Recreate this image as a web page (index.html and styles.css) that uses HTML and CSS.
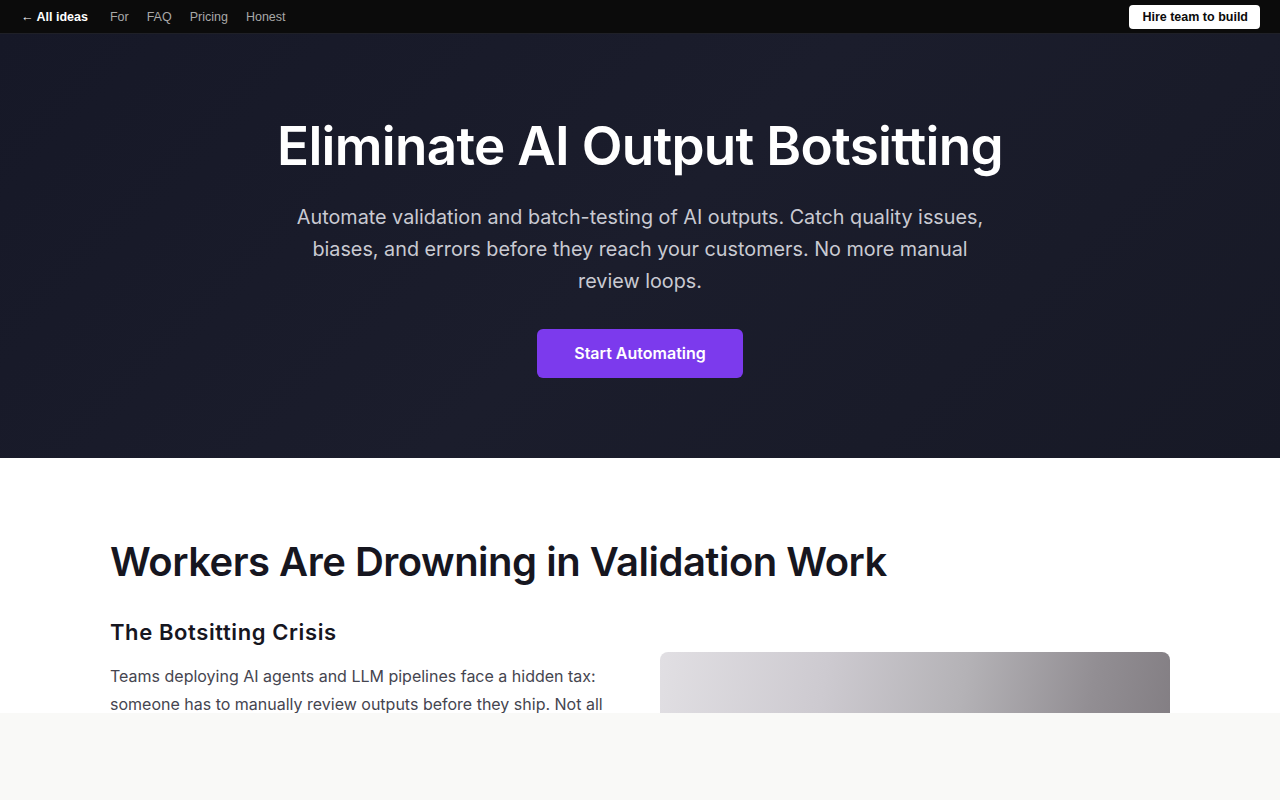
FILE: index.html
```html
<!DOCTYPE html>
<html lang="en">
<head>
    <meta charset="UTF-8">
    <meta name="viewport" content="width=device-width, initial-scale=1.0">
    <title>Eliminate AI Output Botsitting</title>
    <link rel="stylesheet" href="styles.css">
</head>
<body>

    <!-- top navigation -->
    <nav class="topbar">
        <div class="topbar-links">
            <a class="back" href="#">&larr; All ideas</a>
            <a href="#">For</a>
            <a href="#">FAQ</a>
            <a href="#">Pricing</a>
            <a href="#">Honest</a>
        </div>
        <a class="hire" href="#">Hire team to build</a>
    </nav>

    <!-- hero -->
    <header class="hero">
        <h1>Eliminate AI Output Botsitting</h1>
        <p class="lead">Automate validation and batch-testing of AI outputs. Catch quality issues, biases, and errors before they reach your customers. No more manual review loops.</p>
        <a class="cta" href="#">Start Automating</a>
    </header>

    <!-- problem section -->
    <section class="problem">
        <h2>Workers Are Drowning in Validation Work</h2>
        <div class="split">
            <div class="split-text">
                <h3>The Botsitting Crisis</h3>
                <p>Teams deploying AI agents and LLM pipelines face a hidden tax: someone has to manually review outputs before they ship. Not all outputs can be trusted, and every review loop eats into the time saved by automation.</p>
            </div>
            <div class="split-media">
                <div class="photo"></div>
            </div>
        </div>
    </section>

    <div class="bottom-bar"></div>

</body>
</html>
```

FILE: styles.css
```css
body {
    margin: 0;
    font-family: "Inter", "Liberation Sans", sans-serif;
    background-color: #fff;
    color: #16161f;
}
a {
    text-decoration: none;
}

/* nav */
.topbar {
    height: 34px;
    box-sizing: border-box;
    padding: 0 20px 0 21px;
    display: flex;
    align-items: center;
    justify-content: space-between;
    background-color: #0b0b0b;
    border-bottom: 1px solid #1f2027;
    font-family: "Liberation Sans", Arial, sans-serif;
    font-size: 12.5px;
}
.topbar-links {
    display: flex;
    align-items: center;
    gap: 18px;
}
.topbar-links a {
    color: #a8a8a8;
}
.topbar-links .back {
    color: #fff;
    font-weight: bold;
    margin-right: 4px;
}
.hire {
    background-color: #fff;
    color: #0b0b0b;
    font-weight: bold;
    padding: 5px 12px 5px 13px;
    border-radius: 4px;
    line-height: 14px;
}

/* hero */
.hero {
    height: 424px;
    box-sizing: border-box;
    padding-top: 81px;
    text-align: center;
    background: linear-gradient(135deg, #161827 0%, #1b1d2c 50%, #171926 100%);
    color: #fff;
}
.hero h1 {
    margin: 0;
    font-size: 53px;
    line-height: 62px;
    font-weight: 600;
    letter-spacing: -0.7px;
}
.lead {
    max-width: 700px;
    margin: 24px auto 0;
    font-size: 19.8px;
    line-height: 32px;
    color: #c9cad2;
}
.cta {
    display: inline-block;
    margin-top: 32px;
    width: 206px;
    height: 49px;
    line-height: 49px;
    border-radius: 6px;
    background-color: #7c3aed;
    color: #fff;
    font-size: 16px;
    font-weight: 600;
}

/* problem section */
.problem {
    max-width: 1060px;
    margin: 0 auto;
    padding: 78px 0 0;
}
.problem h2 {
    margin: 0;
    font-size: 40px;
    line-height: 52px;
    font-weight: 600;
    letter-spacing: -0.5px;
}
.split {
    display: grid;
    grid-template-columns: 1fr 1fr;
    gap: 40px;
    margin-top: 30px;
}
.split-text h3 {
    margin: 0;
    font-size: 22px;
    line-height: 28px;
    font-weight: 600;
    letter-spacing: 0.6px;
}
.split-text p {
    margin: 16px 0 0;
    font-size: 16px;
    line-height: 28px;
    color: #45454f;
}
.split-media {
    padding-top: 34px;
}
.photo {
    height: 300px;
    border-radius: 8px;
    background: linear-gradient(100deg, #e1dfe3 0%, #cdcad0 30%, #b4b2b6 55%, #928e93 78%, #7c777c 100%);
}

/* fixed strip at the bottom */
.bottom-bar {
    position: fixed;
    left: 0;
    right: 0;
    bottom: 0;
    height: 87px;
    background-color: #f9f9f7;
}
```
